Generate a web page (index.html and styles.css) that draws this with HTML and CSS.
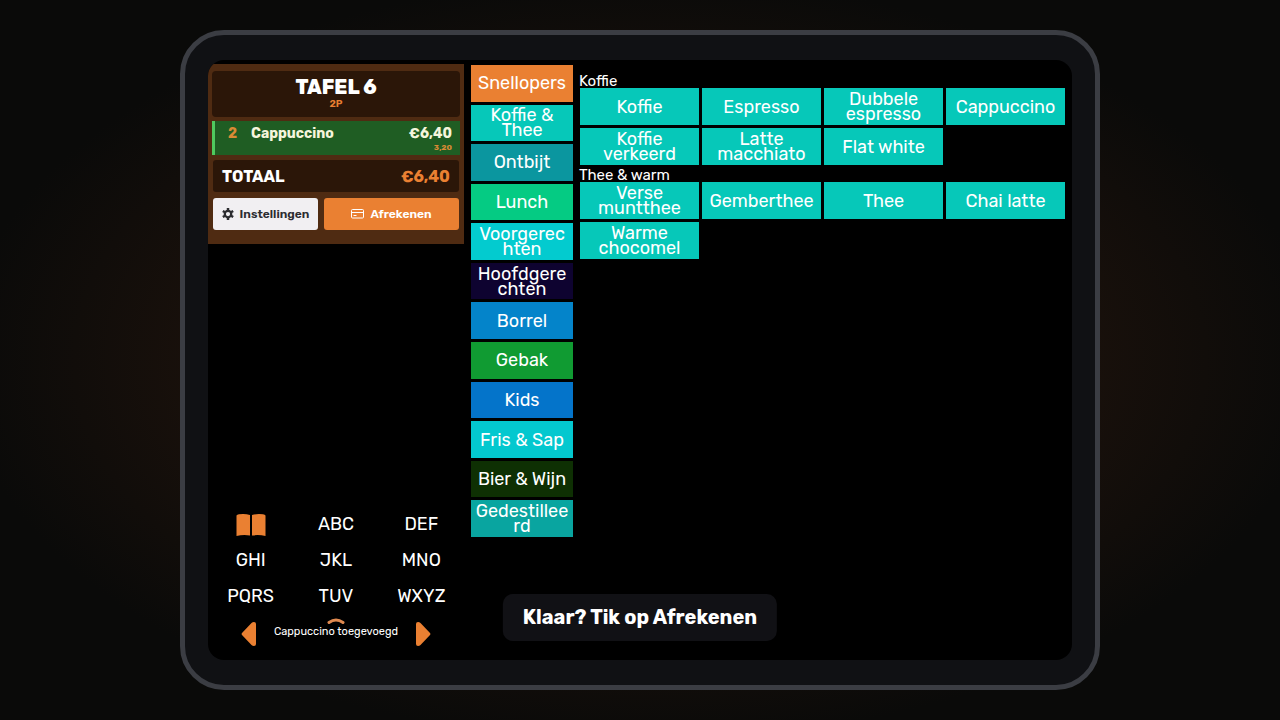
FILE: index.html
```html
<!DOCTYPE html>
<html lang="nl">
<head>
  <meta charset="UTF-8">
  <meta name="viewport" content="width=device-width, initial-scale=1.0">
  <title>Kassa - Tafel 6</title>
  <link rel="stylesheet" href="styles.css">
</head>
<body>
  <main class="tablet">
    <div class="screen">
      <aside class="sidebar">
        <section class="order">
          <header class="order-header">
            <h1>TAFEL 6</h1>
            <p>2P</p>
          </header>
          <div class="order-line">
            <span class="qty">2</span>
            <span class="name">Cappuccino</span>
            <span class="price">€6,40<small>3,20</small></span>
          </div>
          <div class="total">
            <span>TOTAAL</span>
            <span class="amount">€6,40</span>
          </div>
          <div class="actions">
            <button class="btn settings" type="button">
              <svg width="12" height="12" viewBox="0 0 24 24" fill="none" stroke="currentColor"><circle cx="12" cy="12" r="6.500" stroke-width="4.500"/><path d="M12 0v5M12 19v5M1.600 6l4.400 2.500M18 15.500l4.400 2.500M1.600 18l4.400-2.500M18 8.500l4.400-2.500" stroke-width="5"/></svg>
              Instellingen
            </button>
            <button class="btn pay" type="button">
              <svg width="13" height="10" viewBox="0 0 13 10" fill="none" stroke="currentColor"><rect x=".5" y=".5" width="12" height="8.500" rx="1"/><path d="M1 3.500h11M2.500 6.500h3"/></svg>
              Afrekenen
            </button>
          </div>
        </section>

        <nav class="keypad">
          <button type="button" aria-label="Menukaart">
            <svg width="30" height="24" viewBox="0 0 30 24" fill="#ea8032"><path d="M.5 3.500Q1 2.500 3 2.300 9 1.500 14 3v20.500Q7 22.500.5 24z"/><path d="M16 3q5-1.500 11-.7 2 .2 2.500 1.200V24Q23 22.500 16 23.500z"/></svg>
          </button>
          <button type="button">ABC</button>
          <button type="button">DEF</button>
          <button type="button">GHI</button>
          <button type="button">JKL</button>
          <button type="button">MNO</button>
          <button type="button">PQRS</button>
          <button type="button">TUV</button>
          <button type="button">WXYZ</button>
        </nav>
        <div class="pager">
          <button type="button" aria-label="Vorige">
            <svg width="16" height="24" viewBox="0 0 16 24" fill="#ea8032"><path d="M1 11Q0 12 1 13l9.500 10q1 1 2.500 1 2 0 2-2V2q0-2-2-2-1.500 0-2.500 1z"/></svg>
          </button>
          <div class="status">
            <svg width="18" height="6" viewBox="0 0 18 6" fill="none" stroke="#e08a50" stroke-width="3" stroke-linecap="round"><path d="M2 4.500q7-5 14 0"/></svg>
            <span>Cappuccino toegevoegd</span>
          </div>
          <button type="button" aria-label="Volgende">
            <svg width="16" height="24" viewBox="0 0 16 24" fill="#ea8032"><path d="M15 11q1 1 0 2L5.500 23q-1 1-2.500 1-2 0-2-2V2q0-2 2-2 1.500 0 2.500 1z"/></svg>
          </button>
        </div>
      </aside>

      <nav class="categories">
        <button class="tile snel" type="button">Snellopers</button>
        <button class="tile koffie" type="button">Koffie &amp; Thee</button>
        <button class="tile ontbijt" type="button">Ontbijt</button>
        <button class="tile lunch" type="button">Lunch</button>
        <button class="tile voor" type="button">Voorgerechten</button>
        <button class="tile hoofd" type="button">Hoofdgerechten</button>
        <button class="tile borrel" type="button">Borrel</button>
        <button class="tile gebak" type="button">Gebak</button>
        <button class="tile kids" type="button">Kids</button>
        <button class="tile fris" type="button">Fris &amp; Sap</button>
        <button class="tile bier" type="button">Bier &amp; Wijn</button>
        <button class="tile sterk" type="button">Gedestilleerd</button>
      </nav>

      <section class="products">
        <h2>Koffie</h2>
        <div class="grid">
          <button class="tile" type="button">Koffie</button>
          <button class="tile" type="button">Espresso</button>
          <button class="tile" type="button">Dubbele espresso</button>
          <button class="tile" type="button">Cappuccino</button>
          <button class="tile" type="button">Koffie verkeerd</button>
          <button class="tile" type="button">Latte macchiato</button>
          <button class="tile" type="button">Flat white</button>
        </div>
        <h2>Thee &amp; warm</h2>
        <div class="grid">
          <button class="tile" type="button">Verse muntthee</button>
          <button class="tile" type="button">Gemberthee</button>
          <button class="tile" type="button">Thee</button>
          <button class="tile" type="button">Chai latte</button>
          <button class="tile" type="button">Warme chocomel</button>
        </div>
      </section>
    </div>
    <div class="hint">Klaar? Tik op Afrekenen</div>
  </main>
</body>
</html>
```
FILE: styles.css
```css
:root {
  --orange: #ea8032;
  --brown: #4f2b12;
  --dark-brown: #2b1608;
  --teal: #06c8b9;
}

* {
  box-sizing: border-box;
}

body {
  margin: 0;
  min-height: 100vh;
  padding: 30px 180px;
  display: flex;
  font-family: Rubik, Roboto, sans-serif;
  color: #fff;
  background: radial-gradient(ellipse at center, #21150c 0%, #18100b 50%, #0a0a09 75%);
}

h1, h2, p {
  margin: 0;
}

button {
  font-family: inherit;
  color: inherit;
  border: none;
  background: none;
  padding: 0;
  cursor: pointer;
}

.tablet {
  flex: 1;
  display: flex;
  position: relative;
  padding: 25px 23px;
  border: 5px solid #3b3d43;
  border-radius: 44px;
  background: #101114;
}

.screen {
  flex: 1;
  display: flex;
  gap: 7px;
  padding: 4px 7px 0 0;
  border-radius: 16px;
  background: #000;
  overflow: hidden;
}

/* bon + toetsen */
.sidebar {
  width: 256px;
  display: flex;
  flex-direction: column;
}

.order {
  padding: 7px 4px 14px;
  background: var(--brown);
}

.order-header {
  height: 46px;
  padding-top: 6px;
  text-align: center;
  border-radius: 4px;
  background: var(--dark-brown);
}

.order-header h1 {
  font-size: 20px;
  line-height: 20px;
  font-weight: 800;
}

.order-header p {
  font-size: 10px;
  line-height: 14px;
  font-weight: 600;
  color: var(--orange);
}

.order-line {
  height: 34px;
  margin: 4px 0 5px;
  padding: 4px 8px 0 13px;
  display: flex;
  gap: 14px;
  font-size: 14px;
  line-height: 17px;
  font-weight: 700;
  color: #f5f5dc;
  border-left: 3px solid #4fc95e;
  background: #1f5d23;
}

.order-line .qty {
  color: #d98a35;
}

.order-line .name {
  flex: 1;
}

.order-line .price {
  text-align: right;
}

.order-line small {
  display: block;
  font-size: 8px;
  line-height: 11px;
  color: #d98a35;
}

.total {
  height: 32px;
  margin: 0 1px 6px;
  padding: 0 9px;
  display: flex;
  align-items: center;
  justify-content: space-between;
  font-size: 16px;
  font-weight: 700;
  border-radius: 3px;
  background: var(--dark-brown);
}

.total .amount {
  color: var(--orange);
}

.actions {
  display: flex;
  gap: 6px;
  margin: 0 1px;
}

.btn {
  height: 32px;
  display: flex;
  align-items: center;
  justify-content: center;
  gap: 6px;
  font-size: 12px;
  font-weight: 600;
  border-radius: 3px;
}

.settings {
  flex: 7;
  color: #2c2c30;
  background: #f1eff2;
}

.pay {
  flex: 9;
  background: var(--orange);
}

.keypad {
  margin-top: auto;
  display: grid;
  grid-template-columns: repeat(3, 1fr);
}

.keypad button {
  height: 36px;
  display: flex;
  align-items: center;
  justify-content: center;
  font-size: 18px;
}

.pager {
  height: 46px;
  padding: 8px 33px 0;
  display: flex;
  justify-content: space-between;
  align-items: flex-start;
}

.status {
  flex: 1;
  display: flex;
  flex-direction: column;
  align-items: center;
  margin-top: -4px;
  font-size: 11px;
  line-height: 16px;
  white-space: nowrap;
}

/* tegels */
.tile {
  min-width: 0;
  padding: 1px 3px 0;
  font-size: 18px;
  line-height: 15px;
  word-break: break-word;
  background: var(--teal);
}

.categories {
  width: 102px;
  height: 472px;
  margin-top: 1px;
  display: grid;
  grid-auto-rows: 1fr;
  gap: 3px;
}

.snel { background: var(--orange); }
.koffie { background: #06c8b9; }
.ontbijt { background: #0b969f; }
.lunch { background: #05cb83; }
.voor { background: #03cbcf; }
.hoofd { background: #0e0330; }
.borrel { background: #0484ca; }
.gebak { background: #109b32; }
.kids { background: #0474ca; }
.fris { background: #03c8cf; }
.bier { background: #0e3003; }
.sterk { background: #09a5a0; }

.products {
  flex: 1;
  padding-top: 7px;
}

.products h2 {
  height: 17px;
  margin-left: -1px;
  font-size: 15px;
  line-height: 20px;
  font-weight: 400;
}

.grid {
  height: 77px;
  display: grid;
  grid-template-columns: repeat(4, 1fr);
  grid-template-rows: repeat(2, 1fr);
  gap: 3px;
}

.hint {
  position: absolute;
  left: 50%;
  bottom: 44px;
  transform: translateX(-50%);
  padding: 12px 20px;
  font-size: 20px;
  line-height: 23px;
  font-weight: 700;
  white-space: nowrap;
  border-radius: 10px;
  background: #111115;
}
```
